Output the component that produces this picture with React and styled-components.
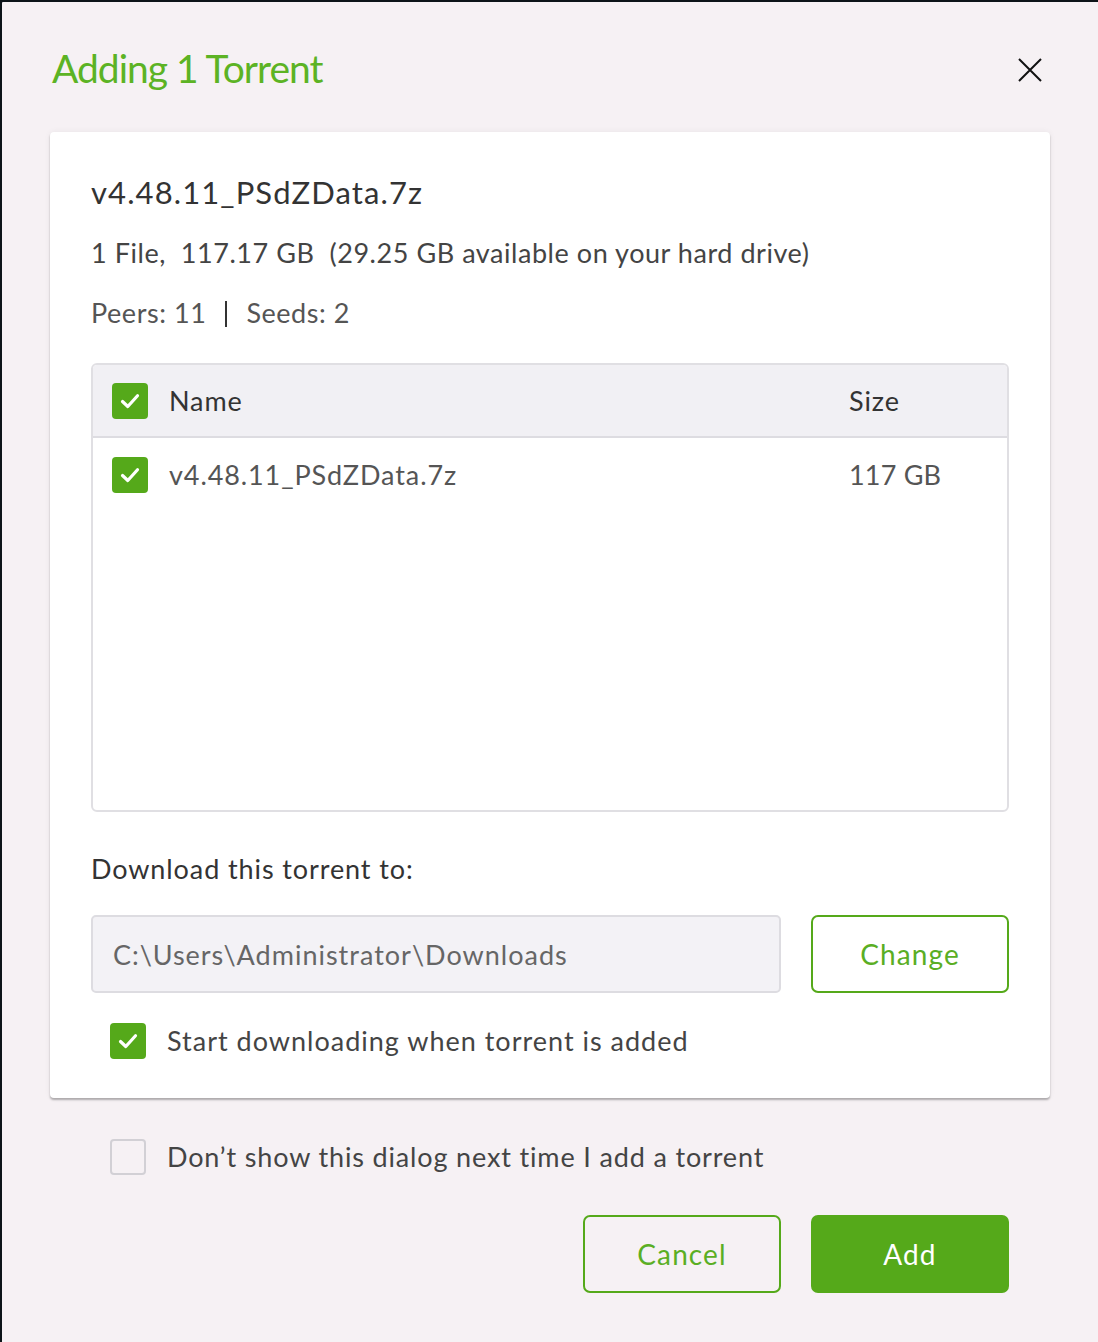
import React from "react";
import styled, { createGlobalStyle } from "styled-components";

const GREEN = "#55a91a";

const GlobalStyle = createGlobalStyle`
  html, body {
    margin: 0;
    padding: 0;
    background: #0d1418;
  }
  body {
    font-family: Lato, "Open Sans", sans-serif;
  }
`;

const Dialog = styled.div`
  box-sizing: border-box;
  width: 1098px;
  height: 1342px;
  background: #f6f1f4;
  border-top: 2px solid #0d1418;
  border-left: 2px solid #0d1418;
  border-top-left-radius: 3px;
  padding: 0 48px 0 48px;
`;

const Header = styled.div`
  box-sizing: border-box;
  height: 130px;
  padding-top: 42px;
  display: flex;
  justify-content: space-between;
  align-items: flex-start;
`;

const Title = styled.h1`
  margin: 0 0 0 2px;
  font-size: 39px;
  line-height: 48px;
  font-weight: 400;
  color: #5cb324;
  letter-spacing: -1px;
`;

const CloseButton = styled.button`
  border: none;
  background: none;
  padding: 0;
  margin: 14px 8px 0 0;
  width: 24px;
  height: 24px;
  cursor: pointer;
  display: flex;
`;

const Card = styled.div`
  background: #fff;
  border-radius: 4px;
  box-shadow: 0 2px 2px rgba(0, 0, 0, 0.28), 0 0 6px rgba(0, 0, 0, 0.06);
  padding: 40px 41px 39px;
`;

const FileName = styled.div`
  font-size: 31px;
  line-height: 40px;
  color: #333;
  letter-spacing: 1.1px;
`;

const InfoLine = styled.div`
  font-size: 27px;
  line-height: 36px;
  color: ${(p) => p.color || "#444"};
  letter-spacing: 0.55px;
  margin-top: ${(p) => p.gap}px;
  white-space: pre;
`;

const Divider = styled.span`
  display: inline-block;
  width: 2px;
  height: 26px;
  background: #333;
  margin: 0 19px 0 19px;
  vertical-align: -4px;
`;

const Table = styled.div`
  margin-top: 32px;
  height: 449px;
  box-sizing: border-box;
  border: 2px solid #e0dfe3;
  border-radius: 6px;
  overflow: hidden;
`;

const TableRow = styled.div`
  display: grid;
  grid-template-columns: 1fr 139px;
  align-items: center;
  padding: 0 19px;
  box-sizing: border-box;
  height: 73px;
  background: ${(p) => (p.head ? "#f1f0f4" : "#fff")};
  border-bottom: ${(p) => (p.head ? "2px solid #dddce1" : "none")};
  font-size: 27px;
  color: ${(p) => (p.head ? "#333" : "#555")};
  letter-spacing: 0.9px;
`;

const NameCell = styled.div`
  display: flex;
  align-items: center;
  gap: 21px;
`;

const SizeCell = styled.div`
  letter-spacing: ${(p) => (p.tight ? "0.2px" : "0.9px")};
`;

const Box = styled.span`
  width: 36px;
  height: 36px;
  box-sizing: border-box;
  border-radius: 4px;
  flex-shrink: 0;
  display: flex;
  align-items: center;
  justify-content: center;
  background: ${(p) => (p.checked ? GREEN : "transparent")};
  border: ${(p) => (p.checked ? "none" : "2px solid #d2d0d5")};
`;

const Checkbox = ({ checked }) => (
  <Box checked={checked}>
    {checked && (
      <svg width="22" height="22" viewBox="0 0 22 22">
        <path
          d="M3.5 11.5 L8.8 16.5 L18.5 5.8"
          fill="none"
          stroke="#fff"
          strokeWidth="3.2"
          strokeLinecap="round"
          strokeLinejoin="round"
        />
      </svg>
    )}
  </Box>
);

const Label = styled.div`
  margin-top: 39px;
  font-size: 27px;
  line-height: 36px;
  color: #333;
  letter-spacing: 0.9px;
`;

const PathRow = styled.div`
  margin-top: 28px;
  display: flex;
  gap: 30px;
`;

const PathInput = styled.div`
  flex: 1;
  height: 78px;
  box-sizing: border-box;
  background: #f3f2f6;
  border: 2px solid #dddce1;
  border-radius: 5px;
  padding: 0 20px;
  display: flex;
  align-items: center;
  font-size: 27px;
  color: #666;
  letter-spacing: 1px;
`;

const Button = styled.button`
  width: 198px;
  height: 78px;
  box-sizing: border-box;
  border-radius: 7px;
  border: 2px solid ${GREEN};
  background: ${(p) => (p.primary ? GREEN : "transparent")};
  color: ${(p) => (p.primary ? "#fff" : "#5aae24")};
  font-family: Lato, "Open Sans", sans-serif;
  font-size: 28px;
  letter-spacing: 1.1px;
  cursor: pointer;
`;

const CheckRow = styled.div`
  display: flex;
  align-items: center;
  gap: 21px;
  margin-top: ${(p) => p.gap}px;
  padding-left: ${(p) => p.indent}px;
  font-size: 27px;
  line-height: 36px;
  color: #444;
  letter-spacing: ${(p) => p.spacing}px;
`;

const Footer = styled.div`
  display: flex;
  justify-content: flex-end;
  gap: 30px;
  margin-top: 40px;
  padding-right: 41px;
`;

export default function App() {
  return (
    <>
      <GlobalStyle />
      <Dialog>
        <Header>
          <Title>Adding 1 Torrent</Title>
          <CloseButton aria-label="Close">
            <svg width="24" height="24" viewBox="0 0 24 24">
              <path d="M1 1 L23 23 M23 1 L1 23" stroke="#111" strokeWidth="2" />
            </svg>
          </CloseButton>
        </Header>
        <Card>
          <FileName>v4.48.11_PSdZData.7z</FileName>
          <InfoLine gap={23}>{"1 File,  117.17 GB  (29.25 GB available on your hard drive)"}</InfoLine>
          <InfoLine gap={24} color="#555">
            Peers: 11<Divider />Seeds: 2
          </InfoLine>
          <Table>
            <TableRow head>
              <NameCell>
                <Checkbox checked />
                Name
              </NameCell>
              <SizeCell>Size</SizeCell>
            </TableRow>
            <TableRow>
              <NameCell>
                <Checkbox checked />
                v4.48.11_PSdZData.7z
              </NameCell>
              <SizeCell tight>117 GB</SizeCell>
            </TableRow>
          </Table>
          <Label>Download this torrent to:</Label>
          <PathRow>
            <PathInput>C:\Users\Administrator\Downloads</PathInput>
            <Button>Change</Button>
          </PathRow>
          <CheckRow gap={30} indent={19} spacing={1}>
            <Checkbox checked />
            Start downloading when torrent is added
          </CheckRow>
        </Card>
        <CheckRow gap={41} indent={60} spacing={0.85}>
          <Checkbox />
          Don’t show this dialog next time I add a torrent
        </CheckRow>
        <Footer>
          <Button>Cancel</Button>
          <Button primary>Add</Button>
        </Footer>
      </Dialog>
    </>
  );
}
